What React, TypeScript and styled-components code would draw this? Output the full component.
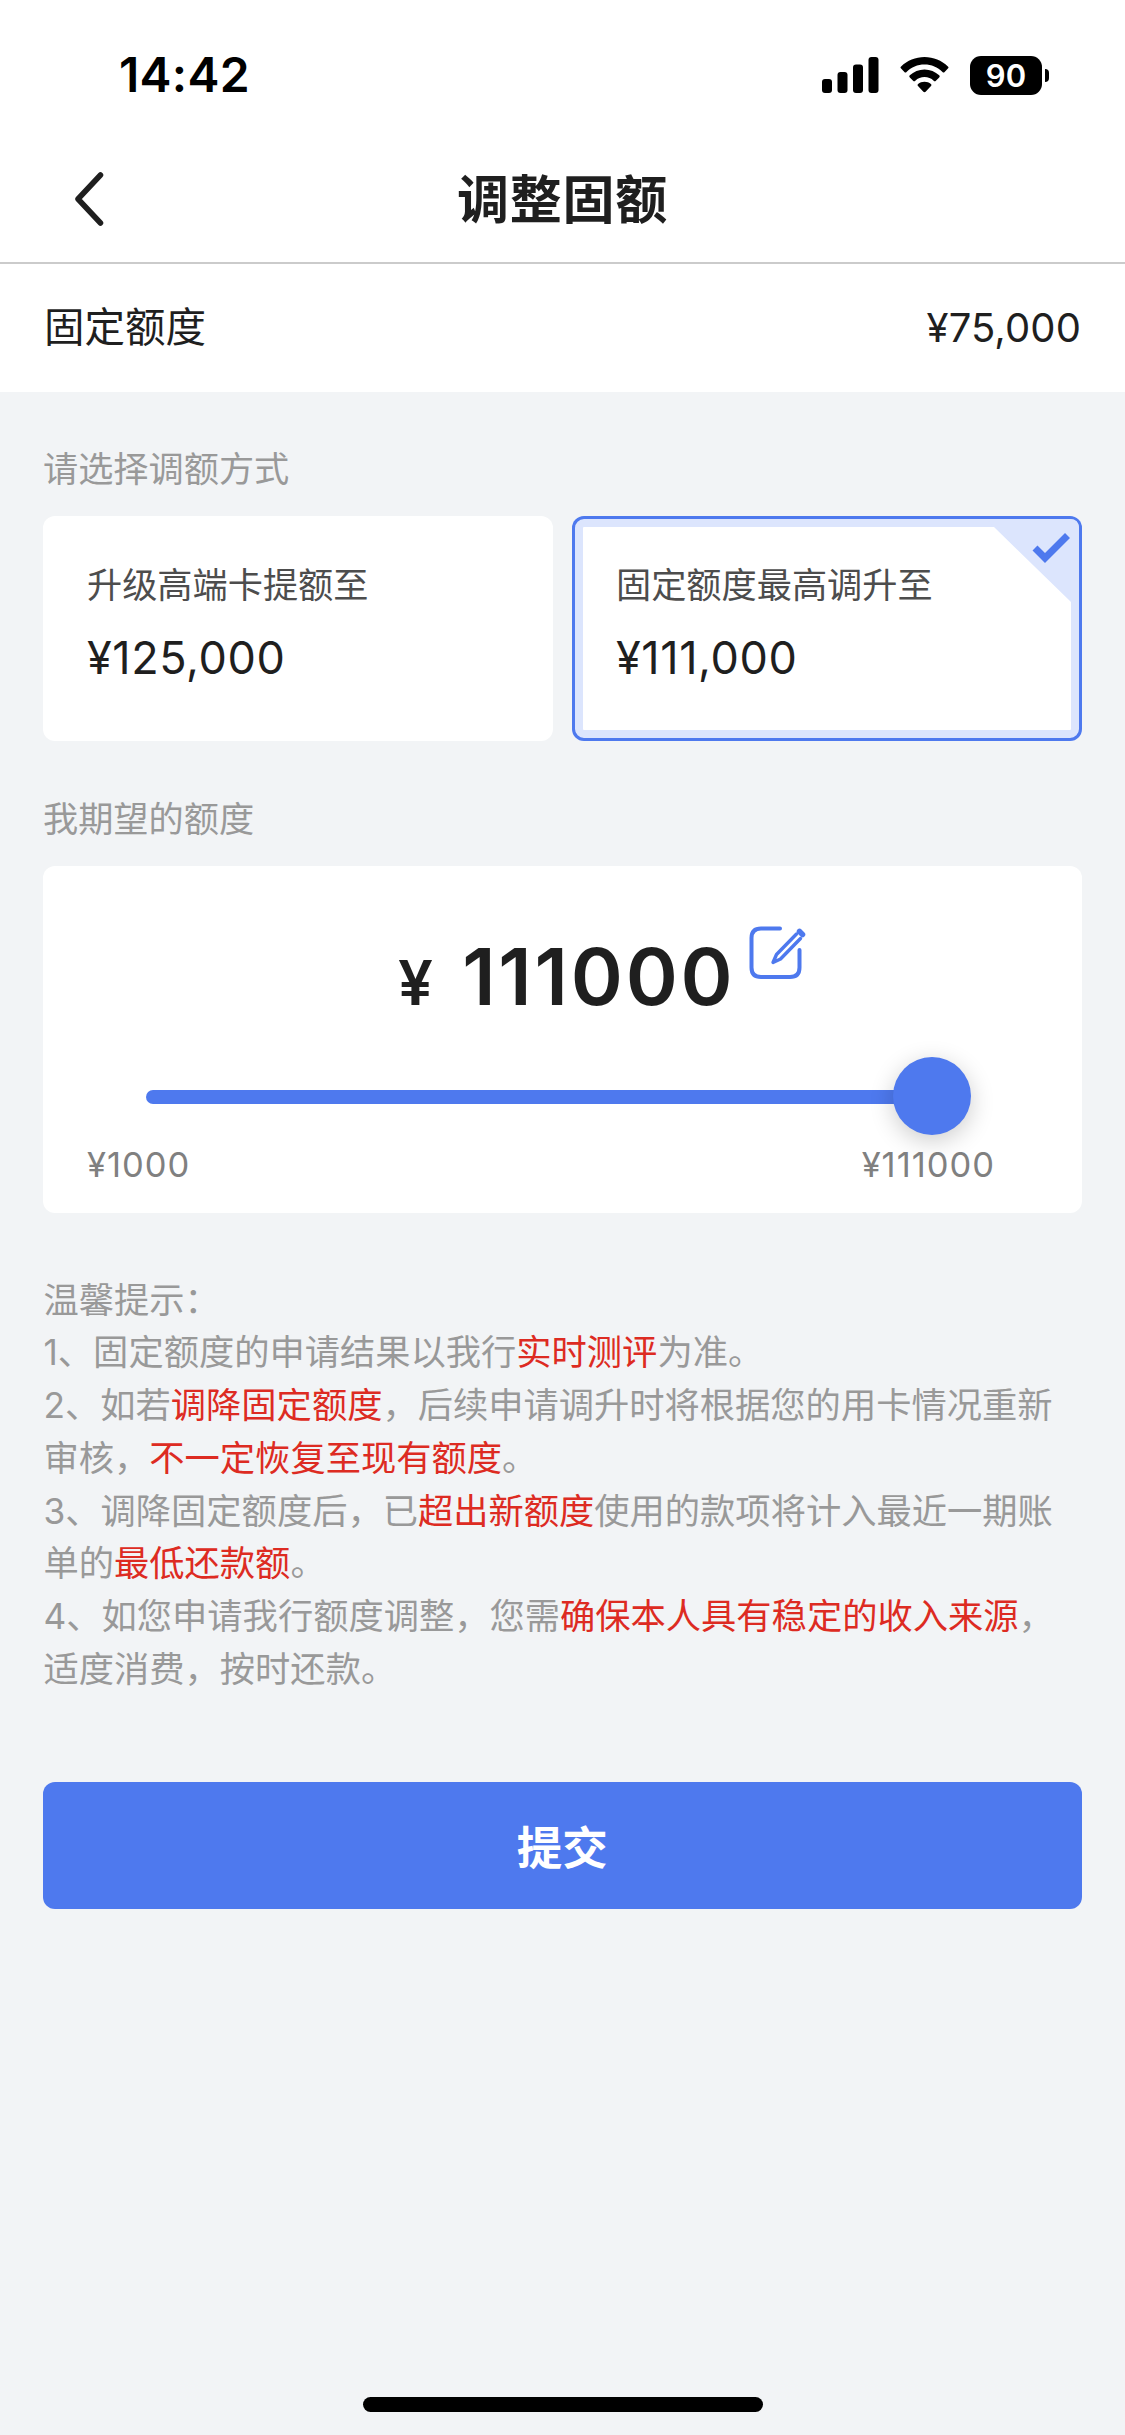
import React, { useState } from 'react';
import styled, { createGlobalStyle, css } from 'styled-components';

const blue = '#4e79ee';
const ink = '#1f1f1f';

const GlobalStyle = createGlobalStyle`
  * { box-sizing: border-box; }
  body {
    margin: 0;
    background: #f2f4f6;
    font-family: Inter, "Noto Sans CJK SC", sans-serif;
    color: ${ink};
  }
  button { font: inherit; color: inherit; border: 0; padding: 0; background: none; text-align: left; }
`;

const Screen = styled.div`
  width: 1125px;
  height: 2435px;
  display: flex;
  flex-direction: column;
  overflow: hidden;
`;

const StatusBar = styled.div`
  height: 132px;
  padding: 18px 76px 0 119px;
  display: flex;
  align-items: center;
  justify-content: space-between;
  background: #fff;
`;

const Clock = styled.span`
  font-size: 48px;
  line-height: 60px;
  font-weight: 600;
  color: #000;
  letter-spacing: 0.3px;
`;

const StatusIcons = styled.div`
  display: flex;
  align-items: center;
`;

const SignalIcon = styled.svg`
  margin-right: 21px;
`;

const WifiIcon = styled.svg`
  margin-right: 21px;
`;

const Battery = styled.div`
  width: 72px;
  height: 39px;
  border-radius: 11px;
  background: #000;
  color: #fff;
  display: flex;
  align-items: center;
  justify-content: center;
  font-size: 31px;
  line-height: 39px;
  font-weight: 600;
`;

const BatteryCap = styled.div`
  width: 4px;
  height: 13px;
  margin-left: 3px;
  border-radius: 0 4px 4px 0;
  background: #000;
`;

const NavBar = styled.header`
  height: 132px;
  padding: 2px 72px 0;
  display: grid;
  grid-template-columns: 60px 1fr 60px;
  align-items: center;
  background: #fff;
  border-bottom: 2px solid #cbcbcb;
`;

const BackButton = styled.button`
  display: flex;
`;

const Title = styled.h1`
  margin: 0;
  padding-top: 5px;
  text-align: center;
  font-size: 52px;
  line-height: 64px;
  font-weight: 600;
  letter-spacing: 0.8px;
`;

const CurrentRow = styled.div`
  height: 128px;
  padding: 0 44px;
  display: flex;
  align-items: center;
  justify-content: space-between;
  background: #fff;
  font-size: 40.5px;
  line-height: 60px;
`;

const CurrentValue = styled.span`
  font-size: 40px;
  letter-spacing: 0.1px;
`;

const Content = styled.main`
  flex: 1;
  padding: 0 43.5px 0 43px;
  display: flex;
  flex-direction: column;
`;

const SectionLabel = styled.h2<{ $top: number }>`
  margin: ${(p) => p.$top}px 0 22px;
  font-size: 35.2px;
  line-height: 50px;
  font-weight: 400;
  color: #999;
`;

const Options = styled.div`
  display: grid;
  grid-template-columns: 1fr 1fr;
  gap: 19.5px;
`;

const OptionCard = styled.button<{ $selected: boolean }>`
  position: relative;
  height: 225px;
  padding: 43px 44px;
  border-radius: 12px;
  background: #fff;
  display: flex;
  flex-direction: column;
  ${(p) =>
    p.$selected &&
    css`
      box-shadow: inset 0 0 0 3px ${blue}, inset 0 0 0 11px #dce5fd;
    `}
`;

const OptionName = styled.span`
  font-size: 35.2px;
  line-height: 52px;
  color: #4d4d4d;
`;

const OptionAmount = styled.span`
  margin-top: 18px;
  font-size: 45px;
  line-height: 58px;
  letter-spacing: 0.6px;
`;

const CornerMark = styled.svg`
  position: absolute;
  top: 3px;
  right: 3px;
`;

const AmountCard = styled.section`
  height: 347px;
  border-radius: 12px;
  background: #fff;
  display: flex;
  flex-direction: column;
`;

const AmountRow = styled.div`
  height: 150px;
  padding: 60px 0 0 355px;
  display: flex;
`;

const AmountText = styled.div`
  height: 100px;
  line-height: 100px;
  width: 337.5px;
  display: flex;
  align-items: baseline;
  justify-content: space-between;
  font-weight: 600;
`;

const Currency = styled.span`
  font-size: 62px;
`;

const Amount = styled.span`
  font-size: 79px;
  letter-spacing: 2.8px;
`;

const EditButton = styled.button`
  display: flex;
  align-self: flex-start;
  margin-left: 13.5px;
`;

const Slider = styled.div`
  height: 80px;
  margin: 40px 110px 0 102.5px;
  display: flex;
  align-items: center;
`;

const Track = styled.div`
  flex: none;
  width: 762px;
  height: 14px;
  margin-top: 3px;
  border-radius: 7px;
  background: ${blue};
`;

const Thumb = styled.div`
  flex: none;
  width: 78px;
  height: 78px;
  margin-left: -14.5px;
  border-radius: 50%;
  background: ${blue};
  box-shadow: 0 6px 24px rgba(0, 0, 0, 0.2);
`;

const RangeLabels = styled.div`
  margin-top: 7px;
  padding: 0 86.5px 0 44px;
  display: flex;
  justify-content: space-between;
  font-size: 34.5px;
  line-height: 44px;
  letter-spacing: 1px;
  color: #808080;
`;

const Tips = styled.section`
  margin-top: 62px;
  padding-left: 0.5px;
  font-size: 35.28px;
  line-height: 52.8px;
  color: #999;
`;

const TipLine = styled.p`
  margin: 0;
  white-space: nowrap;
`;

const Hot = styled.span`
  color: #dd2b22;
`;

const Submit = styled.button`
  height: 127px;
  margin-top: 85px;
  border-radius: 12px;
  background: ${blue};
  color: #fff;
  text-align: center;
  font-size: 45.5px;
  font-weight: 600;
`;

const HomeIndicator = styled.div`
  width: 400px;
  height: 15px;
  margin: 0 auto 23px;
  border-radius: 8px;
  background: #000;
`;

const options = [
  { name: '升级高端卡提额至', amount: '¥125,000' },
  { name: '固定额度最高调升至', amount: '¥111,000' },
];

export default function App() {
  const [selected, setSelected] = useState(1);
  return (
    <Screen>
      <GlobalStyle />
      <StatusBar>
        <Clock>14:42</Clock>
        <StatusIcons>
          <SignalIcon width="57" height="36" viewBox="0 0 57 36">
            <rect x="0" y="22" width="10" height="14" rx="3" />
            <rect x="15.5" y="15" width="10" height="21" rx="3" />
            <rect x="31" y="7.5" width="10" height="28.5" rx="3" />
            <rect x="46.5" y="0" width="10" height="36" rx="3" />
          </SignalIcon>
          <WifiIcon width="49" height="36" viewBox="0 0 49 36">
            <path d="M24.5 0C15.600 0 7.300 3.500 1.100 9.400a1.500 1.500 0 0 0 0 2.200l3.300 3.300a1.500 1.500 0 0 0 2.100 0C11.300 10.300 17.600 7.600 24.500 7.600s13.200 2.700 18 7.300a1.500 1.500 0 0 0 2.100 0l3.300-3.300a1.500 1.500 0 0 0 0-2.200C41.700 3.500 33.400 0 24.500 0z" />
            <path d="M24.500 12.400c-5.600 0-10.800 2.200-14.700 5.800a1.500 1.500 0 0 0 0 2.200l3.300 3.300a1.600 1.600 0 0 0 2.200 0c2.400-2.200 5.700-3.600 9.200-3.600s6.800 1.400 9.200 3.600a1.600 1.600 0 0 0 2.200 0l3.300-3.300a1.500 1.500 0 0 0 0-2.200c-3.900-3.600-9.100-5.800-14.700-5.800z" />
            <path d="M24.500 24.700c-2.500 0-4.700.9-6.400 2.300-.7.600-.7 1.500-.1 2.100l5.400 5.700c.6.600 1.600.6 2.200 0l5.400-5.700c.6-.6.6-1.500-.1-2.100-1.700-1.400-3.900-2.300-6.400-2.300z" />
          </WifiIcon>
          <Battery>90</Battery>
          <BatteryCap />
        </StatusIcons>
      </StatusBar>

      <NavBar>
        <BackButton aria-label="返回">
          <svg width="34" height="56" viewBox="0 0 34 56" fill="none" stroke={ink} strokeWidth="5.500" strokeLinecap="round" strokeLinejoin="round">
            <path d="M28.500 5 6 29l22.500 24" />
          </svg>
        </BackButton>
        <Title>调整固额</Title>
      </NavBar>

      <CurrentRow>
        <span>固定额度</span>
        <CurrentValue>¥75,000</CurrentValue>
      </CurrentRow>

      <Content>
        <SectionLabel $top={52}>请选择调额方式</SectionLabel>
        <Options>
          {options.map((o, i) => (
            <OptionCard key={o.name} $selected={i === selected} onClick={() => setSelected(i)}>
              <OptionName>{o.name}</OptionName>
              <OptionAmount>{o.amount}</OptionAmount>
              {i === selected && (
                <CornerMark width="92" height="92" viewBox="0 0 92 92">
                  <path d="M0 0H83Q92 0 92 9V92L84 83 7 8Z" fill="#dce5fd" />
                  <path d="M48 29 58 39 80.500 16.500" fill="none" stroke={blue} strokeWidth="7" />
                </CornerMark>
              )}
            </OptionCard>
          ))}
        </Options>

        <SectionLabel $top={52.5}>我期望的额度</SectionLabel>
        <AmountCard>
          <AmountRow>
            <AmountText>
              <Currency>¥</Currency>
              <Amount>111000</Amount>
            </AmountText>
            <EditButton aria-label="编辑">
              <svg width="58" height="54" viewBox="0 0 58 54" fill="none" stroke={blue} strokeWidth="4" strokeLinecap="round" strokeLinejoin="round">
                <path d="M31 2.500H12Q2.500 2.500 2.500 12V41.500Q2.500 51 12 51H41Q50.500 51 50.500 41.500V24" />
                <path d="M47.500 8 27.500 28.500 24 36.500 31.500 33 51.500 12.500" strokeWidth="3.400" />
                <path d="M50.500 5.500 53.500 8.500" strokeWidth="5.500" />
              </svg>
            </EditButton>
          </AmountRow>
          <Slider>
            <Track />
            <Thumb />
          </Slider>
          <RangeLabels>
            <span>¥1000</span>
            <span>¥111000</span>
          </RangeLabels>
        </AmountCard>

        <Tips>
          <TipLine>温馨提示：</TipLine>
          <TipLine>1、固定额度的申请结果以我行<Hot>实时测评</Hot>为准。</TipLine>
          <TipLine>2、如若<Hot>调降固定额度</Hot>，后续申请调升时将根据您的用卡情况重新</TipLine>
          <TipLine>审核，<Hot>不一定恢复至现有额度</Hot>。</TipLine>
          <TipLine>3、调降固定额度后，已<Hot>超出新额度</Hot>使用的款项将计入最近一期账</TipLine>
          <TipLine>单的<Hot>最低还款额</Hot>。</TipLine>
          <TipLine>4、如您申请我行额度调整，您需<Hot>确保本人具有稳定的收入来源</Hot>，</TipLine>
          <TipLine>适度消费，按时还款。</TipLine>
        </Tips>

        <Submit>提交</Submit>
      </Content>
      <HomeIndicator />
    </Screen>
  );
}
